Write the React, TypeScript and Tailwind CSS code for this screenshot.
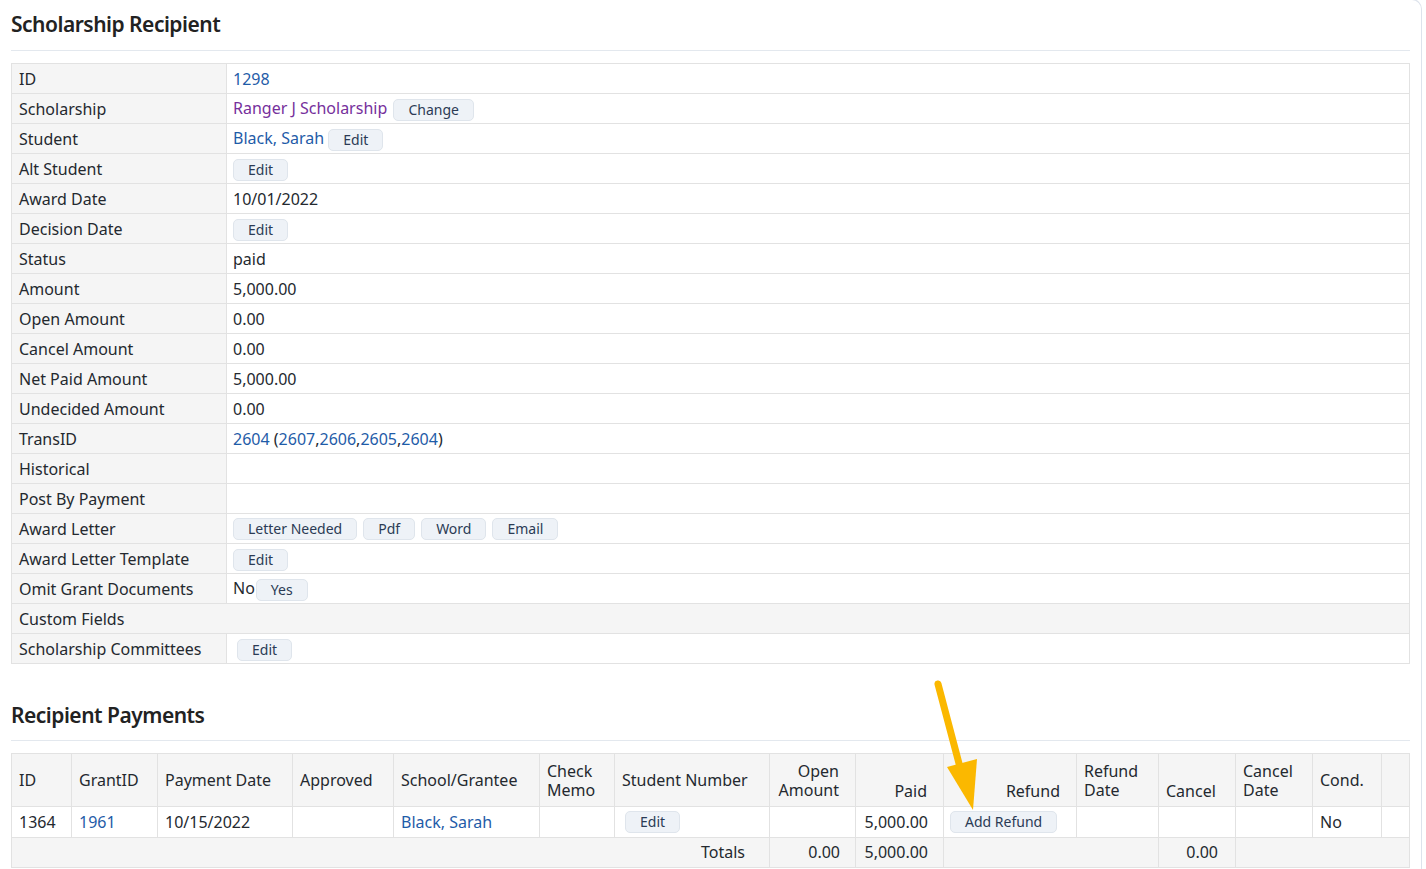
import React from 'react';

const LINK = 'text-[#1f5ca8]';
const VISITED = 'text-[#76309c]';

function Btn({ children, className = '' }: { children: React.ReactNode; className?: string }) {
  return (
    <span
      className={`inline-block align-middle rounded-[5px] border border-[#dfe5ec] bg-[#eef2f7] px-[14px] text-[14px] leading-[20px] text-[#2b3b55] ${className}`}
    >
      {children}
    </span>
  );
}

type Row = { label: string; value?: React.ReactNode; full?: boolean };

const ROWS: Row[] = [
  { label: 'ID', value: <span className={LINK}>1298</span> },
  {
    label: 'Scholarship',
    value: (
      <>
        <span className={VISITED}>Ranger J Scholarship</span> <Btn className="ml-[2px]">Change</Btn>
      </>
    ),
  },
  {
    label: 'Student',
    value: (
      <>
        <span className={LINK}>Black, Sarah</span> <Btn>Edit</Btn>
      </>
    ),
  },
  { label: 'Alt Student', value: <Btn>Edit</Btn> },
  { label: 'Award Date', value: '10/01/2022' },
  { label: 'Decision Date', value: <Btn>Edit</Btn> },
  { label: 'Status', value: 'paid' },
  { label: 'Amount', value: '5,000.00' },
  { label: 'Open Amount', value: '0.00' },
  { label: 'Cancel Amount', value: '0.00' },
  { label: 'Net Paid Amount', value: '5,000.00' },
  { label: 'Undecided Amount', value: '0.00' },
  {
    label: 'TransID',
    value: (
      <>
        <span className={LINK}>2604</span> (<span className={LINK}>2607</span>,<span className={LINK}>2606</span>,
        <span className={LINK}>2605</span>,<span className={LINK}>2604</span>)
      </>
    ),
  },
  { label: 'Historical' },
  { label: 'Post By Payment' },
  {
    label: 'Award Letter',
    value: (
      <span className="flex gap-[6px]">
        <Btn>Letter Needed</Btn>
        <Btn>Pdf</Btn>
        <Btn>Word</Btn>
        <Btn>Email</Btn>
      </span>
    ),
  },
  { label: 'Award Letter Template', value: <Btn>Edit</Btn> },
  {
    label: 'Omit Grant Documents',
    value: (
      <>
        No<Btn className="ml-px">Yes</Btn>
      </>
    ),
  },
  { label: 'Custom Fields', full: true },
  { label: 'Scholarship Committees', value: <Btn className="ml-[4px]">Edit</Btn> },
];

const td = 'border border-[#e2e2e2] px-[7px] py-0';

export default function App() {
  return (
    <div
      className="relative min-h-screen bg-white text-[16px] text-[#24292f]"
      style={{ fontFamily: '"Noto Sans", "Open Sans", sans-serif' }}
    >
      <div className="-mt-px w-[1422px] rounded-tr-[10px] border-r border-t border-[#dde3ec] pl-[11px] pr-[11px] pb-[2px]">
        {/* recipient details */}
        <h2 className="pt-[11px] text-[21px] font-semibold leading-[26px] tracking-[-0.5px] text-[#222]">
          Scholarship Recipient
        </h2>
        <div className="mt-[13px] border-t border-[#e3e8ee]" />
        <table className="mt-[12px] w-full border-collapse">
          <tbody>
            {ROWS.map((r) =>
              r.full ? (
                <tr key={r.label} className="h-[30px] bg-[#f5f5f5]">
                  <td colSpan={2} className={td}>
                    {r.label}
                  </td>
                </tr>
              ) : (
                <tr key={r.label} className="h-[30px]">
                  <td className={`${td} w-[215px] bg-[#f5f5f5]`}>{r.label}</td>
                  <td className={`${td} pl-[6px]`}>{r.value}</td>
                </tr>
              )
            )}
          </tbody>
        </table>

        {/* payments */}
        <h2 className="mt-[38px] text-[21px] font-semibold leading-[26px] tracking-[-0.5px] text-[#222]">
          Recipient Payments
        </h2>
        <div className="mt-[12px] border-t border-[#e3e8ee]" />
        <table className="mt-[12px] w-full border-collapse leading-[19px]">
          <thead>
            <tr className="h-[53px] bg-[#f5f5f5]">
              <th className={`${td} w-[60px] text-left font-normal`}>ID</th>
              <th className={`${td} w-[86px] text-left font-normal`}>GrantID</th>
              <th className={`${td} w-[135px] text-left font-normal`}>Payment Date</th>
              <th className={`${td} w-[101px] text-left font-normal`}>Approved</th>
              <th className={`${td} w-[146px] text-left font-normal`}>School/Grantee</th>
              <th className={`${td} w-[75px] pt-[2px] text-left font-normal`}>
                Check
                <br />
                Memo
              </th>
              <th className={`${td} w-[155px] text-left font-normal`}>Student Number</th>
              <th className={`${td} w-[86px] pt-[2px] pr-[16px] text-right font-normal`}>
                Open
                <br />
                Amount
              </th>
              <th className={`${td} w-[88px] pb-[5px] pr-[16px] text-right align-bottom font-normal`}>Paid</th>
              <th className={`${td} w-[133px] pb-[5px] pr-[16px] text-right align-bottom font-normal`}>Refund</th>
              <th className={`${td} w-[82px] pt-[2px] text-left font-normal`}>
                Refund
                <br />
                Date
              </th>
              <th className={`${td} w-[77px] pb-[5px] text-left align-bottom font-normal`}>Cancel</th>
              <th className={`${td} w-[77px] pt-[2px] text-left font-normal`}>
                Cancel
                <br />
                Date
              </th>
              <th className={`${td} w-[69px] text-left font-normal`}>Cond.</th>
              <th className={`${td} font-normal`} />
            </tr>
          </thead>
          <tbody>
            <tr className="h-[31px]">
              <td className={td}>1364</td>
              <td className={`${td} ${LINK}`}>1961</td>
              <td className={td}>10/15/2022</td>
              <td className={td} />
              <td className={`${td} ${LINK}`}>Black, Sarah</td>
              <td className={td} />
              <td className={`${td} pl-[10px]`}>
                <Btn>Edit</Btn>
              </td>
              <td className={td} />
              <td className={`${td} pr-[15px] text-right`}>5,000.00</td>
              <td className={`${td} pl-[6px]`}>
                <Btn>Add Refund</Btn>
              </td>
              <td className={td} />
              <td className={td} />
              <td className={td} />
              <td className={td}>No</td>
              <td className={td} />
            </tr>
            <tr className="h-[30px] bg-[#f5f5f5]">
              <td colSpan={7} className={`${td} pr-[24px] text-right`}>
                Totals
              </td>
              <td className={`${td} pr-[15px] text-right`}>0.00</td>
              <td className={`${td} pr-[15px] text-right`}>5,000.00</td>
              <td colSpan={2} className={td} />
              <td className={`${td} pr-[17px] text-right`}>0.00</td>
              <td colSpan={3} className={td} />
            </tr>
          </tbody>
        </table>
      </div>

      {/* callout arrow */}
      <svg className="pointer-events-none absolute left-0 top-0" width="1426" height="869">
        <line x1="938" y1="685" x2="961" y2="772" stroke="#fbb800" strokeWidth="7" strokeLinecap="round" />
        <polygon points="947,768 977,760 973,811" fill="#fbb800" />
      </svg>
    </div>
  );
}
